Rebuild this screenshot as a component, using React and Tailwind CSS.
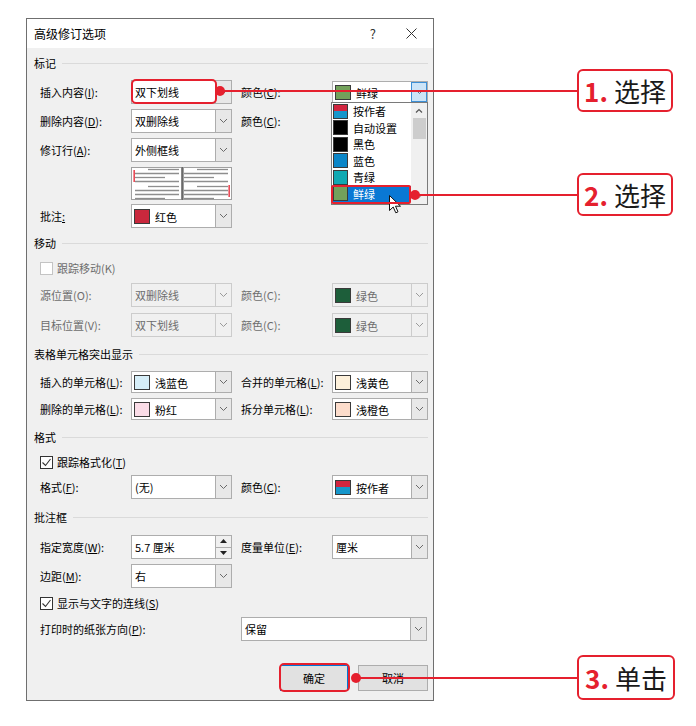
import React from 'react';

const LIGHT_GREEN = 'bg-[#73a15b]';

function Chevron({ color = '#6a6a6a' }) {
  return (
    <svg width="9" height="6" viewBox="0 0 9 6">
      <path d="M1 1l3.5 3.5L8 1" fill="none" stroke={color} strokeWidth="1" />
    </svg>
  );
}

function Swatch({ c, className = 'w-[16px] h-[15px]' }) {
  if (c === 'author') {
    return (
      <div className={`flex shrink-0 flex-col border border-[#3a3a3a] ${className}`}>
        <div className="flex-1 bg-[#d1253f]" />
        <div className="flex-1 bg-[#1596cb]" />
      </div>
    );
  }
  return <div className={`shrink-0 border border-[#3a3a3a] ${c} ${className}`} />;
}

function Combo({ className = '', text, swatch, disabled, focus }) {
  return (
    <div
      className={`flex shrink-0 border ${
        disabled ? 'border-[#cccccc] bg-[#f0f0f0] text-[#6d6d6d]' : 'border-[#adadad] bg-white text-black'
      } ${className}`}
    >
      <div className="flex min-w-0 flex-1 items-center gap-[5px] pl-[2px]">
        {swatch && <Swatch c={swatch} />}
        {text && <span className={swatch ? 'pt-[3px]' : 'pl-[1px]'}>{text}</span>}
      </div>
      {focus ? (
        <div className="flex w-[16px] items-center justify-center border border-[#3c8fd6] bg-[#cce4f7]">
          <Chevron color="#5a6f86" />
        </div>
      ) : (
        <div
          className={`flex w-[16px] items-center justify-center border-l ${
            disabled ? 'border-[#cccccc] bg-[#f0f0f0]' : 'border-[#adadad] bg-[#e8e8e8]'
          }`}
        >
          <Chevron color={disabled ? '#9a9a9a' : '#6a6a6a'} />
        </div>
      )}
    </div>
  );
}

function Label({ className = 'w-[91px]', disabled, children }) {
  return <div className={`shrink-0 ${disabled ? 'text-[#6d6d6d]' : 'text-black'} ${className}`}>{children}</div>;
}

function Heading({ className = '', children }) {
  return (
    <div className={`flex h-[16px] items-center ${className}`}>
      <span>{children}</span>
      <div className="ml-[6px] h-px flex-1 bg-[#dadada]" />
    </div>
  );
}

function Checkbox({ checked, disabled, className = '', children }) {
  return (
    <div className={`flex h-[16px] items-center gap-[4px] ${className}`}>
      <div
        className={`flex h-[13px] w-[13px] items-center justify-center border bg-white ${
          disabled ? 'border-[#c4c4c4]' : 'border-[#333333]'
        }`}
      >
        {checked && (
          <svg width="11" height="11" viewBox="0 0 11 11">
            <path d="M1.5 5.5l3 3 5-6.5" fill="none" stroke="#333" strokeWidth="1.1" />
          </svg>
        )}
      </div>
      <span className={disabled ? 'text-[#6d6d6d]' : 'text-black'}>{children}</span>
    </div>
  );
}

function Preview() {
  const lines = [
    [2, 17, 48],
    [6, 4, 48],
    [10, 4, 34],
    [14, 4, 48],
    [19, 17, 48],
    [23, 4, 48],
    [27, 4, 48],
    [31, 4, 34],
  ];
  return (
    <svg width="101" height="33" viewBox="0 0 101 33" className="shrink-0">
      <rect x="0.5" y="0.5" width="50" height="32" fill="#fff" stroke="#a0a0a0" />
      <rect x="50.5" y="0" width="1.5" height="33" fill="#6a6a6a" />
      <rect x="52.5" y="0.5" width="48" height="32" fill="#fff" stroke="#a0a0a0" />
      {lines.map(([y, a, b], i) => (
        <line key={'l' + i} x1={a} x2={b} y1={y + 0.5} y2={y + 0.5} stroke="#8e8e8e" strokeWidth="1.3" />
      ))}
      {lines.map(([y, a, b], i) => (
        <line key={'r' + i} x1={a + 49} x2={b + 49} y1={y + 0.5} y2={y + 0.5} stroke="#8e8e8e" strokeWidth="1.3" />
      ))}
      <rect x="2.5" y="3" width="1.3" height="12" fill="#e5202e" />
      <rect x="97.5" y="18" width="1.3" height="12" fill="#e5202e" />
    </svg>
  );
}

function Spinner({ text }) {
  return (
    <div className="flex h-[24px] w-[101px] shrink-0 border border-[#adadad] bg-white">
      <div className="flex flex-1 items-center pl-[3px]">{text}</div>
      <div className="flex w-[16px] flex-col border-l border-[#adadad]">
        <div className="flex flex-1 items-center justify-center border-b border-[#adadad] bg-[#f0f0f0]">
          <svg width="7" height="4" viewBox="0 0 7 4">
            <path d="M0 4L3.5 0L7 4Z" fill="#222" />
          </svg>
        </div>
        <div className="flex flex-1 items-center justify-center bg-[#f0f0f0]">
          <svg width="7" height="4" viewBox="0 0 7 4">
            <path d="M0 0L3.5 4L7 0Z" fill="#222" />
          </svg>
        </div>
      </div>
    </div>
  );
}

const listItems = [
  { c: 'author', t: '按作者' },
  { c: 'bg-black', t: '自动设置' },
  { c: 'bg-black', t: '黑色' },
  { c: 'bg-[#0b86c8]', t: '蓝色' },
  { c: 'bg-[#10a9b2]', t: '青绿' },
  { c: LIGHT_GREEN, t: '鲜绿', sel: true },
];

function DropList() {
  return (
    <div className="absolute left-[331px] top-[102px] flex h-[103px] w-[97px] border border-[#7a7a7a] bg-white">
      <div className="flex flex-1 flex-col">
        {listItems.map((it) => (
          <div
            key={it.t}
            className={`flex h-[16.5px] items-center gap-[5px] pl-[1px] ${it.sel ? 'bg-[#0a78d4] text-white' : 'text-black'}`}
          >
            <Swatch c={it.c} className="h-[15px] w-[15px]" />
            <span>{it.t}</span>
          </div>
        ))}
      </div>
      <div className="flex w-[16px] flex-col items-center bg-[#f0f0f0]">
        <div className="flex h-[15px] items-center justify-center">
          <svg width="8" height="5" viewBox="0 0 8 5">
            <path d="M1 4.5L4 1.5L7 4.5" fill="none" stroke="#555" strokeWidth="1.2" />
          </svg>
        </div>
        <div className="h-[21px] w-[13px] bg-[#cdcdcd]" />
        <div className="flex-1" />
        <div className="flex h-[15px] items-center justify-center">
          <svg width="8" height="5" viewBox="0 0 8 5">
            <path d="M1 0.5L4 3.5L7 0.5" fill="none" stroke="#a0a0a0" strokeWidth="1.2" />
          </svg>
        </div>
      </div>
    </div>
  );
}

function Callout({ className, num, text }) {
  return (
    <div
      className={`absolute flex items-center justify-center gap-[6px] rounded-[6px] border-2 border-[#e5202e] bg-white text-[26px] leading-none ${className}`}
    >
      <span className="font-bold text-[#e5202e]">{num}</span>
      <span className="text-[#1a1a1a]">{text}</span>
    </div>
  );
}

export default function App() {
  return (
    <div className="relative h-[726px] w-[696px] overflow-hidden bg-white font-['Noto_Sans_CJK_SC','Noto_Sans',sans-serif] text-[11px] text-black">
      <div className="pl-[26px] pt-[18px]">
        <div className="flex h-[683px] w-[408px] flex-col border border-[#6f6f6f] bg-[#f0f0f0]">
          {/* title bar */}
          <div className="flex h-[29px] shrink-0 items-center bg-white pl-[7px] text-[12px]">
            <span>高级修订选项</span>
            <span className="ml-auto mr-[30px] text-[13px] text-[#333]">?</span>
            <svg width="11" height="11" viewBox="0 0 11 11" className="mr-[16px]">
              <path d="M0.5 0.5l10 10M10.5 0.5l-10 10" stroke="#333" strokeWidth="1" />
            </svg>
          </div>

          <div className="flex flex-col pl-[7px] pr-[5px]">
            <Heading className="mt-[7px]">标记</Heading>
            <div className="flex flex-col pl-[6px]">
              <div className="mt-[9px] flex h-[24px] items-center">
                <Label>
                  插入内容(<u>I</u>):
                </Label>
                <Combo className="h-[24px] w-[101px]" text="双下划线" />
                <Label className="ml-[9px] w-[91px]">
                  颜色(<u>C</u>):
                </Label>
                <Combo className="h-[22px] w-[96px]" text="鲜绿" swatch={LIGHT_GREEN} focus />
              </div>
              <div className="mt-[5px] flex h-[24px] items-center">
                <Label>
                  删除内容(<u>D</u>):
                </Label>
                <Combo className="h-[24px] w-[101px]" text="双删除线" />
                <Label className="ml-[9px] w-[91px]">
                  颜色(<u>C</u>):
                </Label>
                {/* hidden under the open list */}
                <Combo className="h-[24px] w-[96px]" />
              </div>
              <div className="mt-[5px] flex h-[24px] items-center">
                <Label>
                  修订行(<u>A</u>):
                </Label>
                <Combo className="h-[24px] w-[101px]" text="外侧框线" />
              </div>
              <div className="mt-[5px] flex h-[33px]">
                <div className="w-[91px] shrink-0" />
                <Preview />
              </div>
              <div className="mt-[4px] flex h-[24px] items-center">
                <Label>
                  批注<u>:</u>
                </Label>
                <Combo className="h-[24px] w-[101px]" text="红色" swatch="bg-[#c9283d]" />
              </div>
            </div>

            <Heading className="mt-[7px]">移动</Heading>
            <div className="flex flex-col pl-[6px]">
              <Checkbox className="mt-[9px]" disabled>
                跟踪移动(K)
              </Checkbox>
              <div className="mt-[7px] flex h-[24px] items-center">
                <Label disabled>源位置(O):</Label>
                <Combo className="h-[24px] w-[101px]" text="双删除线" disabled />
                <Label className="ml-[9px] w-[91px]" disabled>
                  颜色(C):
                </Label>
                <Combo className="h-[24px] w-[96px]" text="绿色" swatch="bg-[#1d5e3a]" disabled />
              </div>
              <div className="mt-[6px] flex h-[24px] items-center">
                <Label disabled>目标位置(V):</Label>
                <Combo className="h-[24px] w-[101px]" text="双下划线" disabled />
                <Label className="ml-[9px] w-[91px]" disabled>
                  颜色(C):
                </Label>
                <Combo className="h-[24px] w-[96px]" text="绿色" swatch="bg-[#1d5e3a]" disabled />
              </div>
            </div>

            <Heading className="mt-[9px]">表格单元格突出显示</Heading>
            <div className="flex flex-col pl-[6px]">
              <div className="mt-[9px] flex h-[22px] items-center">
                <Label>
                  插入的单元格(<u>L</u>):
                </Label>
                <Combo className="h-[22px] w-[101px]" text="浅蓝色" swatch="bg-[#d6eef8]" />
                <Label className="ml-[9px] w-[91px]">
                  合并的单元格(<u>L</u>):
                </Label>
                <Combo className="h-[22px] w-[96px]" text="浅黄色" swatch="bg-[#fdf0da]" />
              </div>
              <div className="mt-[5px] flex h-[22px] items-center">
                <Label>
                  删除的单元格(<u>L</u>):
                </Label>
                <Combo className="h-[22px] w-[101px]" text="粉红" swatch="bg-[#fadce7]" />
                <Label className="ml-[9px] w-[91px]">
                  拆分单元格(<u>L</u>):
                </Label>
                <Combo className="h-[22px] w-[96px]" text="浅橙色" swatch="bg-[#fcdccb]" />
              </div>
            </div>

            <Heading className="mt-[9px]">格式</Heading>
            <div className="flex flex-col pl-[6px]">
              <Checkbox className="mt-[9px]" checked>
                跟踪格式化(<u>T</u>)
              </Checkbox>
              <div className="mt-[5px] flex h-[24px] items-center">
                <Label>
                  格式(<u>F</u>):
                </Label>
                <Combo className="h-[24px] w-[101px]" text="(无)" />
                <Label className="ml-[9px] w-[91px]">
                  颜色(<u>C</u>):
                </Label>
                <Combo className="h-[24px] w-[96px]" text="按作者" swatch="author" />
              </div>
            </div>

            <Heading className="mt-[10px]">批注框</Heading>
            <div className="flex flex-col pl-[6px]">
              <div className="mt-[10px] flex h-[24px] items-center">
                <Label>
                  指定宽度(<u>W</u>):
                </Label>
                <Spinner text="5.7 厘米" />
                <Label className="ml-[9px] w-[91px]">
                  度量单位(<u>E</u>):
                </Label>
                <Combo className="h-[24px] w-[96px]" text="厘米" />
              </div>
              <div className="mt-[5px] flex h-[24px] items-center">
                <Label>
                  边距(<u>M</u>):
                </Label>
                <Combo className="h-[24px] w-[101px]" text="右" />
              </div>
              <Checkbox className="mt-[7px]" checked>
                显示与文字的连线(<u>S</u>)
              </Checkbox>
              <div className="mt-[6px] flex h-[24px] items-center">
                <Label className="w-[201px]">
                  打印时的纸张方向(<u>P</u>):
                </Label>
                <Combo className="h-[24px] w-[186px]" text="保留" />
              </div>
              <div className="mt-[24px] flex h-[26px] justify-end gap-[10px]">
                <div className="flex w-[68px] items-center justify-center border border-[#0078d7] bg-[#e1e1e1]">确定</div>
                <div className="flex w-[70px] items-center justify-center border border-[#adadad] bg-[#e1e1e1]">取消</div>
              </div>
            </div>
          </div>
        </div>
      </div>

      {/* open colour list */}
      <DropList />

      {/* mouse pointer */}
      <svg width="13" height="19" viewBox="0 0 13 19" className="absolute left-[389px] top-[195px]">
        <path d="M0.5 0.5V15.5L4.2 12L6.8 17.8L9 16.8L6.5 11.2H11.5Z" fill="#fff" stroke="#111" strokeWidth="1" />
      </svg>

      {/* annotations */}
      <div className="absolute left-[131px] top-[79px] h-[25px] w-[86px] rounded-[5px] border-2 border-[#e5202e]" />
      <div className="absolute left-[220px] top-[90px] h-[2px] w-[358px] bg-[#e5202e]" />
      <div className="absolute left-[215px] top-[86px] h-[10px] w-[10px] rounded-full bg-[#e5202e]" />

      <div className="absolute left-[331px] top-[185px] h-[19px] w-[80px] rounded-[2px] border-2 border-[#e5202e]" />
      <div className="absolute left-[415px] top-[194px] h-[2px] w-[163px] bg-[#e5202e]" />
      <div className="absolute left-[410px] top-[190px] h-[10px] w-[10px] rounded-full bg-[#e5202e]" />

      <div className="absolute left-[279px] top-[663px] h-[29px] w-[71px] rounded-[5px] border-2 border-[#e5202e]" />
      <div className="absolute left-[357px] top-[677px] h-[2px] w-[221px] bg-[#e5202e]" />
      <div className="absolute left-[351px] top-[673px] h-[10px] w-[10px] rounded-full bg-[#e5202e]" />

      <Callout className="left-[577px] top-[69px] h-[43px] w-[96px]" num="1." text="选择" />
      <Callout className="left-[577px] top-[173px] h-[43px] w-[96px]" num="2." text="选择" />
      <Callout className="left-[577px] top-[655px] h-[45px] w-[98px]" num="3." text="单击" />
    </div>
  );
}
